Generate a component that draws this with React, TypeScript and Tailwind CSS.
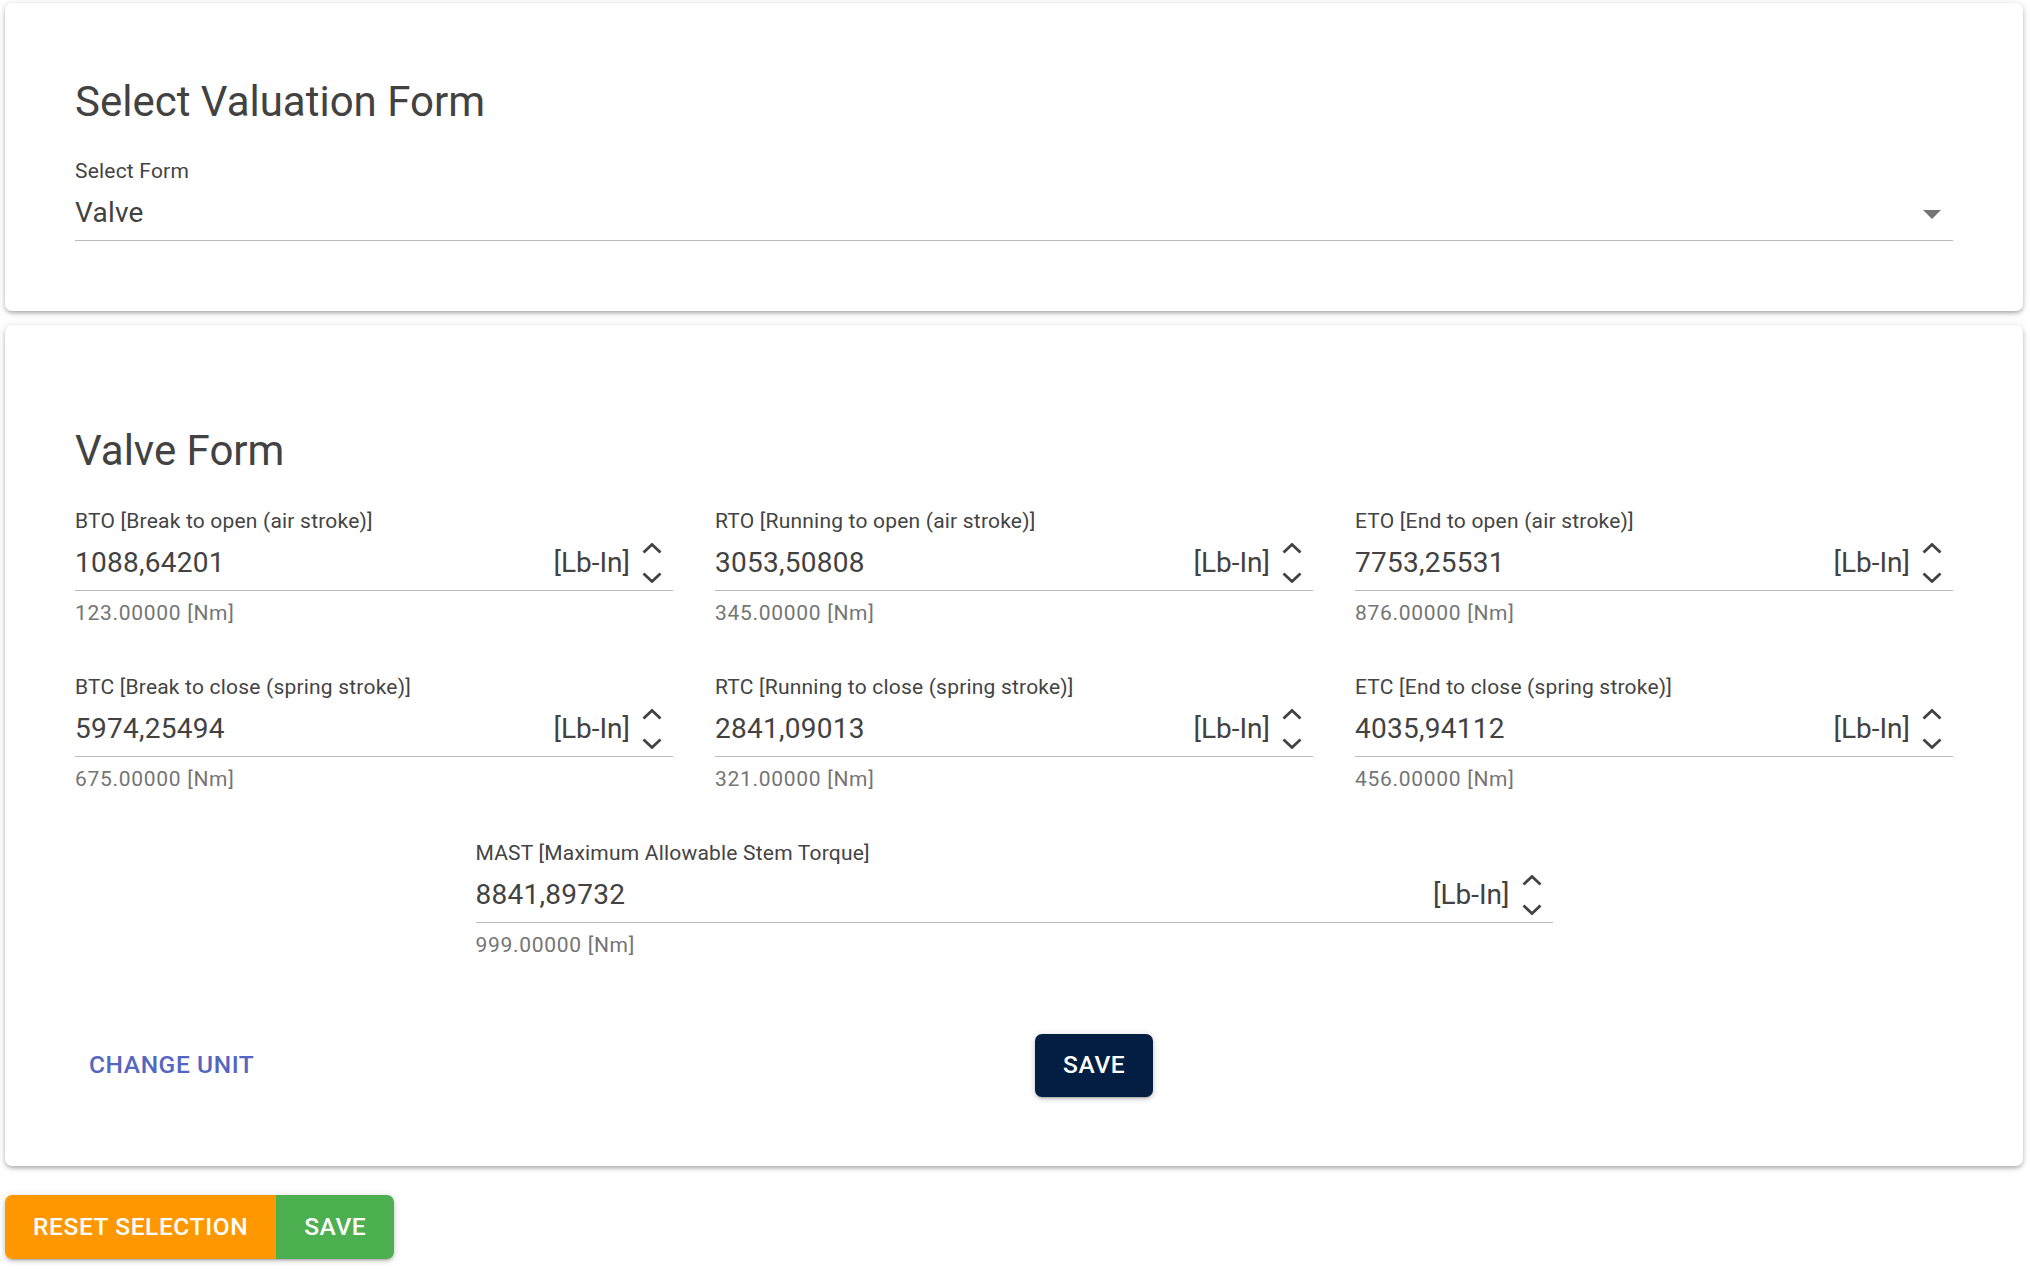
import { ReactNode } from 'react';

interface Field {
    label: string;
    value: string;
    nm: string;
}

const fields: Field[] = [
    { label: 'BTO [Break to open (air stroke)]', value: '1088,64201', nm: '123.00000 [Nm]' },
    { label: 'RTO [Running to open (air stroke)]', value: '3053,50808', nm: '345.00000 [Nm]' },
    { label: 'ETO [End to open (air stroke)]', value: '7753,25531', nm: '876.00000 [Nm]' },
    { label: 'BTC [Break to close (spring stroke)]', value: '5974,25494', nm: '675.00000 [Nm]' },
    { label: 'RTC [Running to close (spring stroke)]', value: '2841,09013', nm: '321.00000 [Nm]' },
    { label: 'ETC [End to close (spring stroke)]', value: '4035,94112', nm: '456.00000 [Nm]' }
];

const mast: Field = {
    label: 'MAST [Maximum Allowable Stem Torque]',
    value: '8841,89732',
    nm: '999.00000 [Nm]'
};

const cardClass =
    'bg-white rounded-[7px] shadow-[0_3px_5px_-2px_rgba(0,0,0,0.2),0_2px_4px_0_rgba(0,0,0,0.14),0_1px_9px_0_rgba(0,0,0,0.12)] px-[70px]';

const raised =
    'shadow-[0_3px_2px_-2px_rgba(0,0,0,0.2),0_2px_4px_0_rgba(0,0,0,0.14),0_1px_9px_0_rgba(0,0,0,0.12)]';

function Spinner() {
    return (
        <div className="flex flex-col gap-[18px] ml-[12px] mr-[11px]">
            <svg width="20" height="11" viewBox="0 0 20 11">
                <polyline points="1.5,9.5 10,1.5 18.5,9.5" fill="none" stroke="#424242" strokeWidth="2.8" />
            </svg>
            <svg width="20" height="11" viewBox="0 0 20 11">
                <polyline points="1.5,1.5 10,9.5 18.5,1.5" fill="none" stroke="#424242" strokeWidth="2.8" />
            </svg>
        </div>
    );
}

function Label({ children }: { children: ReactNode }) {
    return <div className="text-[21px] leading-[21px] tracking-[0.2px] text-[#444444]">{children}</div>;
}

function NumberField({ field }: { field: Field }) {
    return (
        <div>
            <Label>{field.label}</Label>
            <div className="mt-[3px] h-[56px] flex items-center border-b border-[#bababa]">
                <span className="flex-1 text-[28px] leading-[40px] tracking-[0.25px] text-[#424242]">{field.value}</span>
                <span className="text-[28px] leading-[40px] text-[#424242]">[Lb-In]</span>
                <Spinner />
            </div>
            <div className="mt-[5px] text-[21px] leading-[35px] tracking-[0.7px] text-[#757575]">{field.nm}</div>
        </div>
    );
}

export default function App() {
    return (
        <div className="min-h-screen bg-white font-['Roboto',sans-serif] pt-[3px] pl-[5px] pr-[7px] pb-[10px]">
            <div className={`${cardClass} pt-[71px] pb-[70px]`}>
                <h2 className="text-[42px] leading-[55px] font-normal text-[#424242]">Select Valuation Form</h2>
                <div className="mt-[32px]">
                    <Label>Select Form</Label>
                    <div className="mt-[3px] h-[56px] flex items-center border-b border-[#bababa]">
                        <span className="flex-1 text-[28px] leading-[40px] tracking-[0.25px] text-[#424242]">Valve</span>
                        <svg width="18" height="9" viewBox="0 0 18 9" className="mr-[12px] mt-[3px]">
                            <polygon points="0,0 18,0 9,9" fill="#757575" />
                        </svg>
                    </div>
                </div>
            </div>

            <div className={`${cardClass} mt-[14px] pt-[98px] pb-[69px]`}>
                <h2 className="text-[42px] leading-[55px] font-normal text-[#424242]">Valve Form</h2>
                <div className="mt-[33px] grid grid-cols-3 gap-x-[42px] gap-y-[46px]">
                    {fields.map((f) => (
                        <NumberField key={f.label} field={f} />
                    ))}
                </div>
                <div className="mt-[46px] flex justify-center">
                    <div className="w-[1077px]">
                        <NumberField field={mast} />
                    </div>
                </div>
                <div className="mt-[70px] grid grid-cols-2 gap-x-[42px] items-center">
                    <div>
                        <button className="h-[64px] px-[14px] rounded-[7px] text-[24.5px] font-medium tracking-[0.6px] uppercase text-[#5566c0]">
                            Change Unit
                        </button>
                    </div>
                    <div>
                        <button className={`h-[63px] px-[28px] rounded-[7px] bg-[#031e43] text-white text-[24.5px] font-medium tracking-[0.65px] uppercase ${raised}`}>
                            Save
                        </button>
                    </div>
                </div>
            </div>

            <div className={`mt-[29px] inline-flex rounded-[7px] overflow-hidden ${raised}`}>
                <button className="h-[64px] px-[28px] bg-[#ff9800] text-white text-[24.5px] font-medium tracking-[0.6px] uppercase">
                    Reset Selection
                </button>
                <button className="h-[64px] px-[28px] bg-[#4caf50] text-white text-[24.5px] font-medium tracking-[0.6px] uppercase">
                    Save
                </button>
            </div>
        </div>
    );
}
